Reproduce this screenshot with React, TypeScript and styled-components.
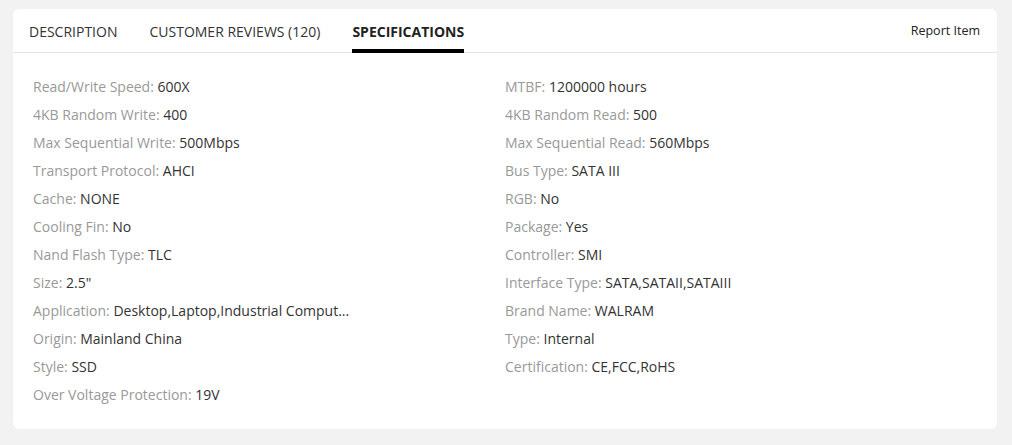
import React from 'react'
import styled, { createGlobalStyle } from 'styled-components'

const GlobalStyle = createGlobalStyle`
  html, body {
    margin: 0;
    padding: 0;
    background: #f2f2f2;
    font-family: 'Open Sans', Roboto, Arial, sans-serif;
  }
  * {
    box-sizing: border-box;
  }
`

const Page = styled.div`
  padding: 9px 15px 16px 13px;
`

const Card = styled.section`
  width: 984px;
  background: #ffffff;
  border-radius: 6px;
  overflow: hidden;
`

const TabBar = styled.div`
  display: flex;
  align-items: flex-start;
  justify-content: space-between;
  height: 44px;
  padding: 0 17px 0 16px;
  border-bottom: 1px solid #e3e3e3;
`

const Tabs = styled.ul`
  display: flex;
  margin: 0;
  padding: 0;
  list-style: none;
`

const Tab = styled.li<{ $active?: boolean }>`
  height: 44px;
  margin-right: 32px;
  margin-bottom: -1px;
  padding-top: 13px;
  font-size: 14px;
  line-height: 20px;
  font-weight: ${(p) => (p.$active ? 700 : 400)};
  color: ${(p) => (p.$active ? '#222222' : '#333333')};
  border-bottom: 4px solid ${(p) => (p.$active ? '#000000' : 'transparent')};
  white-space: nowrap;
  cursor: pointer;
`

const ReportLink = styled.a`
  padding-top: 12px;
  font-size: 12.5px;
  line-height: 20px;
  color: #222222;
  text-decoration: none;
  cursor: pointer;
`

const SpecList = styled.ul`
  display: grid;
  grid-template-columns: 472px 472px;
  margin: 0;
  padding: 20px;
  list-style: none;
`

const SpecItem = styled.li`
  height: 28px;
  font-size: 14px;
  line-height: 28px;
  white-space: nowrap;
`

const SpecName = styled.span`
  color: #999999;
`

const SpecValue = styled.span`
  color: #333333;
`

const specs: [string, string][] = [
  ['Read/Write Speed', '600X'],
  ['MTBF', '1200000 hours'],
  ['4KB Random Write', '400'],
  ['4KB Random Read', '500'],
  ['Max Sequential Write', '500Mbps'],
  ['Max Sequential Read', '560Mbps'],
  ['Transport Protocol', 'AHCI'],
  ['Bus Type', 'SATA III'],
  ['Cache', 'NONE'],
  ['RGB', 'No'],
  ['Cooling Fin', 'No'],
  ['Package', 'Yes'],
  ['Nand Flash Type', 'TLC'],
  ['Controller', 'SMI'],
  ['Size', '2.5"'],
  ['Interface Type', 'SATA,SATAII,SATAIII'],
  ['Application', 'Desktop,Laptop,Industrial Comput...'],
  ['Brand Name', 'WALRAM'],
  ['Origin', 'Mainland China'],
  ['Type', 'Internal'],
  ['Style', 'SSD'],
  ['Certification', 'CE,FCC,RoHS'],
  ['Over Voltage Protection', '19V'],
]

const App = () => (
  <>
    <GlobalStyle />
    <Page>
      <Card>
        <TabBar>
          <Tabs>
            <Tab>DESCRIPTION</Tab>
            <Tab>CUSTOMER REVIEWS (120)</Tab>
            <Tab $active>SPECIFICATIONS</Tab>
          </Tabs>
          <ReportLink>Report Item</ReportLink>
        </TabBar>
        <SpecList>
          {specs.map(([name, value]) => (
            <SpecItem key={name}>
              <SpecName>{name}: </SpecName>
              <SpecValue>{value}</SpecValue>
            </SpecItem>
          ))}
        </SpecList>
      </Card>
    </Page>
  </>
)

export default App
